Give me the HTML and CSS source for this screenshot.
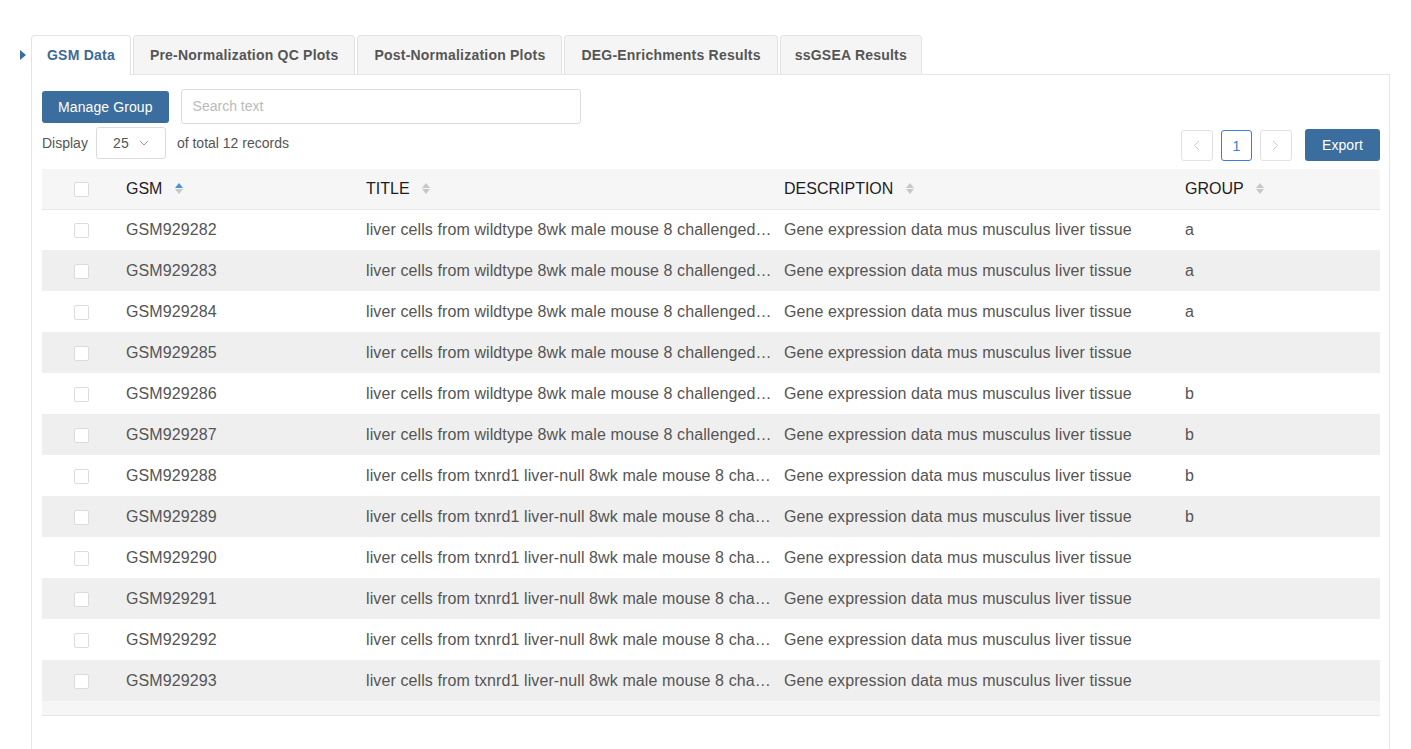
FILE: index.html
```html
<!DOCTYPE html>
<html>
<head>
<meta charset="utf-8">
<link rel="stylesheet" href="styles.css">
</head>
<body>
<div class="page">
  <div class="tabbar">
    <span class="caret"></span>
    <div class="tabs">
      <div class="tab active">GSM Data</div>
      <div class="tab">Pre-Normalization QC Plots</div>
      <div class="tab">Post-Normalization Plots</div>
      <div class="tab">DEG-Enrichments Results</div>
      <div class="tab">ssGSEA Results</div>
    </div>
  </div>
  <div class="panel">
    <div class="toolbar">
      <button class="btn primary">Manage Group</button>
      <div class="search">Search text</div>
    </div>
    <div class="toolbar2">
      <div class="display">
        <span>Display</span>
        <div class="select">25 <svg width="10" height="6" viewBox="0 0 10 6"><path d="M1 1l4 4 4-4" fill="none" stroke="#999" stroke-width="1"/></svg></div>
        <span>of total 12 records</span>
      </div>
      <div class="right">
        <div class="pager">
          <div class="pg dis"><svg width="7" height="11" viewBox="0 0 7 11"><path d="M6 1L1.5 5.5 6 10" fill="none" stroke="#ccc" stroke-width="1"/></svg></div>
          <div class="pg cur">1</div>
          <div class="pg dis"><svg width="7" height="11" viewBox="0 0 7 11"><path d="M1 1l4.5 4.5L1 10" fill="none" stroke="#ccc" stroke-width="1"/></svg></div>
        </div>
        <button class="btn primary export">Export</button>
      </div>
    </div>
    <table class="grid">
      <colgroup>
        <col class="c0"><col class="c1"><col class="c2"><col class="c3"><col class="c4">
      </colgroup>
      <thead>
        <tr>
          <th class="chk"><span class="box"></span></th>
          <th class="sorted">GSM <span class="sort asc"><i class="up"></i><i class="down"></i></span></th>
          <th>TITLE <span class="sort"><i class="up"></i><i class="down"></i></span></th>
          <th>DESCRIPTION <span class="sort"><i class="up"></i><i class="down"></i></span></th>
          <th>GROUP <span class="sort"><i class="up"></i><i class="down"></i></span></th>
        </tr>
      </thead>
      <tbody>
        <tr><td class="chk"><span class="box"></span></td><td>GSM929282</td><td class="ell">liver cells from wildtype 8wk male mouse 8 challenged with acetaminophen</td><td>Gene expression data mus musculus liver tissue</td><td>a</td></tr>
        <tr><td class="chk"><span class="box"></span></td><td>GSM929283</td><td class="ell">liver cells from wildtype 8wk male mouse 8 challenged with acetaminophen</td><td>Gene expression data mus musculus liver tissue</td><td>a</td></tr>
        <tr><td class="chk"><span class="box"></span></td><td>GSM929284</td><td class="ell">liver cells from wildtype 8wk male mouse 8 challenged with acetaminophen</td><td>Gene expression data mus musculus liver tissue</td><td>a</td></tr>
        <tr><td class="chk"><span class="box"></span></td><td>GSM929285</td><td class="ell">liver cells from wildtype 8wk male mouse 8 challenged with acetaminophen</td><td>Gene expression data mus musculus liver tissue</td><td></td></tr>
        <tr><td class="chk"><span class="box"></span></td><td>GSM929286</td><td class="ell">liver cells from wildtype 8wk male mouse 8 challenged with acetaminophen</td><td>Gene expression data mus musculus liver tissue</td><td>b</td></tr>
        <tr><td class="chk"><span class="box"></span></td><td>GSM929287</td><td class="ell">liver cells from wildtype 8wk male mouse 8 challenged with acetaminophen</td><td>Gene expression data mus musculus liver tissue</td><td>b</td></tr>
        <tr><td class="chk"><span class="box"></span></td><td>GSM929288</td><td class="ell">liver cells from txnrd1 liver-null 8wk male mouse 8 challenged with acetaminophen</td><td>Gene expression data mus musculus liver tissue</td><td>b</td></tr>
        <tr><td class="chk"><span class="box"></span></td><td>GSM929289</td><td class="ell">liver cells from txnrd1 liver-null 8wk male mouse 8 challenged with acetaminophen</td><td>Gene expression data mus musculus liver tissue</td><td>b</td></tr>
        <tr><td class="chk"><span class="box"></span></td><td>GSM929290</td><td class="ell">liver cells from txnrd1 liver-null 8wk male mouse 8 challenged with acetaminophen</td><td>Gene expression data mus musculus liver tissue</td><td></td></tr>
        <tr><td class="chk"><span class="box"></span></td><td>GSM929291</td><td class="ell">liver cells from txnrd1 liver-null 8wk male mouse 8 challenged with acetaminophen</td><td>Gene expression data mus musculus liver tissue</td><td></td></tr>
        <tr><td class="chk"><span class="box"></span></td><td>GSM929292</td><td class="ell">liver cells from txnrd1 liver-null 8wk male mouse 8 challenged with acetaminophen</td><td>Gene expression data mus musculus liver tissue</td><td></td></tr>
        <tr><td class="chk"><span class="box"></span></td><td>GSM929293</td><td class="ell">liver cells from txnrd1 liver-null 8wk male mouse 8 challenged with acetaminophen</td><td>Gene expression data mus musculus liver tissue</td><td></td></tr>
      </tbody>
    </table>
    <div class="scrollstrip"></div>
  </div>
</div>
</body>
</html>
```
FILE: styles.css
```css
* { box-sizing: border-box; }
html, body { margin: 0; padding: 0; background: #fff; }
body {
  font-family: "Liberation Sans", Arial, sans-serif;
  color: #555;
  height: 749px;
  overflow: hidden;
}
.page {
  padding: 35px 21px 0 0;
  height: 749px;
  display: flex;
  flex-direction: column;
}
.tabbar {
  display: flex;
  align-items: center;
  position: relative;
  padding-left: 31px;
}
.caret {
  position: absolute;
  left: 20px;
  top: 15px;
  width: 0; height: 0;
  border-left: 6px solid #3b6d9e;
  border-top: 5px solid transparent;
  border-bottom: 5px solid transparent;
}
.tabs { display: flex; gap: 2px; }
.tab {
  height: 39px;
  line-height: 38px;
  padding: 0 16px;
  font-size: 14px;
  letter-spacing: 0.22px;
  font-weight: bold;
  color: #555;
  background: #f5f5f5;
  border: 1px solid #e3e3e3;
  border-bottom: none;
  border-radius: 4px 4px 0 0;
  white-space: nowrap;
}
.tab:last-child { padding: 0 14px; }
.tab.active {
  background: #fff;
  color: #3b6a9a;
  position: relative;
  z-index: 1;
  height: 40px;
  margin-bottom: -1px;
  padding: 0 15px;
}
.panel {
  flex: 1;
  margin-left: 31px;
  border: 1px solid #e6e6e6;
  border-bottom: none;
  padding: 14px 9px 0 10px;
}
.toolbar { display: flex; align-items: center; gap: 12px; }
.btn {
  font-family: inherit;
  border: none;
  border-radius: 3px;
  font-size: 14px;
  cursor: pointer;
}
.btn.primary {
  background: #3b6d9e;
  color: #fff;
  height: 32px;
  padding: 0 16px;
  letter-spacing: 0.1px;
}
.search {
  width: 400px;
  height: 35px;
  border: 1px solid #dcdcdc;
  border-radius: 3px;
  padding: 0 11px;
  font-size: 14px;
  line-height: 33px;
  color: #bbb;
}
.toolbar2 {
  display: flex;
  justify-content: space-between;
  align-items: flex-start;
  margin-top: 3px;
}
.display {
  display: flex;
  align-items: center;
  gap: 8px;
  font-size: 14px;
  color: #555;
}
.display .select {
  width: 70px;
  height: 32px;
  border: 1px solid #dcdcdc;
  border-radius: 3px;
  display: flex;
  align-items: center;
  justify-content: center;
  gap: 10px;
  font-size: 14px;
  margin-right: 3px;
}
.right { display: flex; align-items: center; gap: 13px; margin-top: 2px; }
.pager { display: flex; gap: 8px; margin-top: 1px; }
.pg {
  width: 32px;
  height: 31px;
  border: 1px solid #e2e2e2;
  border-radius: 3px;
  display: flex;
  align-items: center;
  justify-content: center;
  font-size: 14px;
}
.pg.cur { border-color: #3b7dd8; color: #3b7dd8; width: 31px; }
.export { height: 32px; padding: 0 17px !important; }
.grid {
  margin-top: 8px;
  width: 1338px;
  border-collapse: collapse;
  table-layout: fixed;
  font-size: 16px;
}
.c0 { width: 76px; }
.c1 { width: 240px; }
.c2 { width: 418px; }
.c3 { width: 401px; }
.c4 { width: 203px; }
.grid th {
  height: 40px;
  background: #f6f6f6;
  text-align: left;
  font-weight: normal;
  color: #1e1e1e;
  padding: 0 8px;
  border-bottom: 1px solid #e8e8e8;
  white-space: nowrap;
}
.grid td {
  height: 41px;
  padding: 0 8px;
  color: #555;
  white-space: nowrap;
  overflow: hidden;
  letter-spacing: 0.1px;
}
.grid td.ell { text-overflow: ellipsis; padding-right: 4px; }
.grid tbody tr:nth-child(even) td { background: #efefef; }
.grid .chk { text-align: center; padding: 0; padding-left: 2px; }
.box {
  display: inline-block;
  width: 15px;
  height: 15px;
  border: 1px solid #dcdcdc;
  background: #fff;
  border-radius: 2px;
  vertical-align: middle;
}
.sort {
  display: inline-flex;
  flex-direction: column;
  gap: 1px;
  vertical-align: middle;
  margin-left: 8px;
  margin-top: -2px;
}
.sort i {
  display: block;
  width: 0; height: 0;
  border-left: 4px solid transparent;
  border-right: 4px solid transparent;
}
.sort .up { border-bottom: 5px solid #c8c8c8; }
.sort .down { border-top: 5px solid #c8c8c8; }
.sort.asc .up { border-bottom-color: #4a90e2; }
.scrollstrip {
  width: 1338px;
  height: 15px;
  background: #f6f6f6;
  border-bottom: 1px solid #e6e6e6;
}
```
